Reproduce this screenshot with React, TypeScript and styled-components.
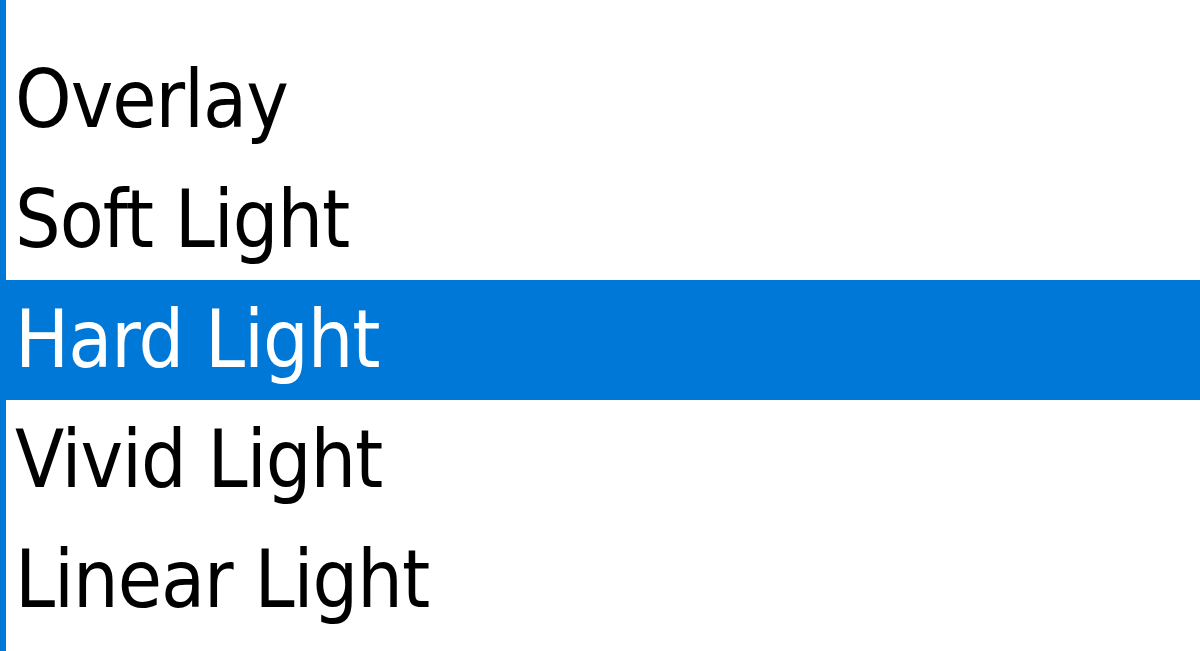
import React from 'react'
import styled, { createGlobalStyle } from 'styled-components'

const GlobalStyle = createGlobalStyle`
  html, body {
    margin: 0;
    padding: 0;
    background: #ffffff;
  }
`

const ListBox = styled.ul`
  list-style: none;
  margin: 0;
  padding: 40px 0 0 0;
  width: 1200px;
  height: 651px;
  box-sizing: border-box;
  overflow: hidden;
  background: #ffffff;
  border-left: 6px solid #0078d7;
  font-family: "DejaVu Sans Condensed", "DejaVu Sans", sans-serif;
  font-stretch: condensed;
  font-size: 80px;
  letter-spacing: -1px;
`

const Option = styled.li<{ $selected?: boolean }>`
  height: 120px;
  line-height: 120px;
  white-space: nowrap;
  color: ${p => (p.$selected ? '#ffffff' : '#000000')};
  background: ${p => (p.$selected ? '#0078d7' : 'transparent')};
  margin-left: ${p => (p.$selected ? '-6px' : '0')};
  padding-left: ${p => (p.$selected ? '15px' : '9px')};
`

const blendModes = ['Overlay', 'Soft Light', 'Hard Light', 'Vivid Light', 'Linear Light']

const App = () => {
  return (
    <>
      <GlobalStyle />
      <ListBox>
        {blendModes.map(mode => (
          <Option key={mode} $selected={mode === 'Hard Light'}>{mode}</Option>
        ))}
      </ListBox>
    </>
  )
}

export default App
